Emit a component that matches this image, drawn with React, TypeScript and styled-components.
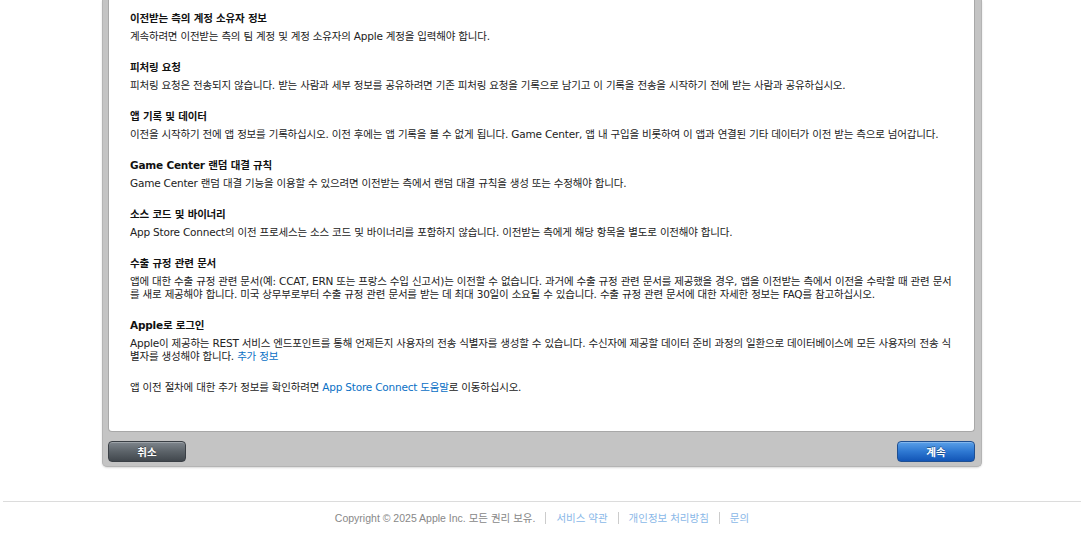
import styled, { createGlobalStyle } from 'styled-components';

const GlobalStyle = createGlobalStyle`
  html, body {
    margin: 0;
    padding: 0;
    background: #fff;
    overflow: hidden;
  }
  body {
    font-family: "DejaVu Sans", "Noto Sans CJK KR", sans-serif;
  }
`;

const Page = styled.div`
  padding-left: 2px;
`;

const Frame = styled.div`
  width: 880px;
  margin: 0 auto;
  background: #c4c4c4;
  border: 1px solid #b4b4b4;
  border-top: none;
  border-radius: 0 0 5px 5px;
  padding: 0 6px 4px 5px;
  box-sizing: border-box;
  box-shadow: 0 1px 2px rgba(0, 0, 0, 0.15);
`;

const Sheet = styled.div`
  background: #fff;
  border: 1px solid #a8a8a8;
  border-top: none;
  border-radius: 0 0 4px 4px;
  padding: 12px 21px 37px;
`;

const Section = styled.div`
  margin-bottom: 18px;
`;

const Heading = styled.h3`
  margin: 0 0 5px;
  font-size: 10.5px;
  line-height: 13px;
  font-weight: bold;
  color: #111;
  letter-spacing: -0.2px;
`;

const Body = styled.p`
  margin: 0;
  font-size: 10.5px;
  line-height: 13px;
  color: #222;
  letter-spacing: -0.2px;
`;

const Link = styled.a`
  color: #0a70c5;
  text-decoration: none;
`;

const ButtonBar = styled.div`
  display: flex;
  justify-content: space-between;
  padding: 9px 0 0;
`;

const Button = styled.button<{ $primary?: boolean }>`
  width: 78px;
  height: 21px;
  border-radius: 4px;
  border: 1px solid ${({ $primary }) => ($primary ? '#1f4f91' : '#3a3f45')};
  background: ${({ $primary }) =>
    $primary
      ? 'linear-gradient(#5aa0e8 0%, #2e78d2 50%, #1255b6 100%)'
      : 'linear-gradient(#7f868d 0%, #5c6369 50%, #41474d 100%)'};
  color: #fff;
  font-family: "DejaVu Sans", "Noto Sans CJK KR", sans-serif;
  font-size: 10.5px;
  font-weight: bold;
  text-shadow: 0 -1px 0 rgba(0, 0, 0, 0.35);
  box-shadow: inset 0 1px 0 rgba(255, 255, 255, 0.25);
  padding: 0;
  cursor: pointer;
`;

const Footer = styled.footer`
  margin: 34px 1px 0 1px;
  border-top: 1px solid #dcdcdc;
  padding-top: 9px;
  display: flex;
  justify-content: center;
  align-items: center;
  font-family: "Liberation Sans", "Noto Sans CJK KR", sans-serif;
  font-size: 10.5px;
  line-height: 14px;
  color: #888;
`;

const FooterLink = styled.a`
  color: #8ab8e8;
  text-decoration: none;
`;

const Divider = styled.span`
  display: inline-block;
  width: 1px;
  height: 12px;
  background: #ccc;
  margin: 0 10px;
`;

const sections: { title: string; body: React.ReactNode }[] = [
  {
    title: '이전받는 측의 계정 소유자 정보',
    body: '계속하려면 이전받는 측의 팀 계정 및 계정 소유자의 Apple 계정을 입력해야 합니다.',
  },
  {
    title: '피처링 요청',
    body: '피처링 요청은 전송되지 않습니다. 받는 사람과 세부 정보를 공유하려면 기존 피처링 요청을 기록으로 남기고 이 기록을 전송을 시작하기 전에 받는 사람과 공유하십시오.',
  },
  {
    title: '앱 기록 및 데이터',
    body: '이전을 시작하기 전에 앱 정보를 기록하십시오. 이전 후에는 앱 기록을 볼 수 없게 됩니다. Game Center, 앱 내 구입을 비롯하여 이 앱과 연결된 기타 데이터가 이전 받는 측으로 넘어갑니다.',
  },
  {
    title: 'Game Center 랜덤 대결 규칙',
    body: 'Game Center 랜덤 대결 기능을 이용할 수 있으려면 이전받는 측에서 랜덤 대결 규칙을 생성 또는 수정해야 합니다.',
  },
  {
    title: '소스 코드 및 바이너리',
    body: 'App Store Connect의 이전 프로세스는 소스 코드 및 바이너리를 포함하지 않습니다. 이전받는 측에게 해당 항목을 별도로 이전해야 합니다.',
  },
  {
    title: '수출 규정 관련 문서',
    body: '앱에 대한 수출 규정 관련 문서(예: CCAT, ERN 또는 프랑스 수입 신고서)는 이전할 수 없습니다. 과거에 수출 규정 관련 문서를 제공했을 경우, 앱을 이전받는 측에서 이전을 수락할 때 관련 문서를 새로 제공해야 합니다. 미국 상무부로부터 수출 규정 관련 문서를 받는 데 최대 30일이 소요될 수 있습니다. 수출 규정 관련 문서에 대한 자세한 정보는 FAQ를 참고하십시오.',
  },
  {
    title: 'Apple로 로그인',
    body: (
      <>
        Apple이 제공하는 REST 서비스 엔드포인트를 통해 언제든지 사용자의 전송 식별자를 생성할 수 있습니다. 수신자에 제공할 데이터 준비 과정의 일환으로 데이터베이스에 모든 사용자의 전송 식별자를 생성해야 합니다. <Link href="#">추가 정보</Link>
      </>
    ),
  },
];

export default function App() {
  return (
    <Page>
      <GlobalStyle />
      <Frame>
        <Sheet>
          {sections.map((s) => (
            <Section key={s.title}>
              <Heading>{s.title}</Heading>
              <Body>{s.body}</Body>
            </Section>
          ))}
          <Body>
            앱 이전 절차에 대한 추가 정보를 확인하려면 <Link href="#">App Store Connect 도움말</Link>로 이동하십시오.
          </Body>
        </Sheet>
        <ButtonBar>
          <Button>취소</Button>
          <Button $primary>계속</Button>
        </ButtonBar>
      </Frame>
      <Footer>
        <span>Copyright © 2025 Apple Inc. 모든 권리 보유.</span>
        <Divider />
        <FooterLink href="#">서비스 약관</FooterLink>
        <Divider />
        <FooterLink href="#">개인정보 처리방침</FooterLink>
        <Divider />
        <FooterLink href="#">문의</FooterLink>
      </Footer>
    </Page>
  );
}
